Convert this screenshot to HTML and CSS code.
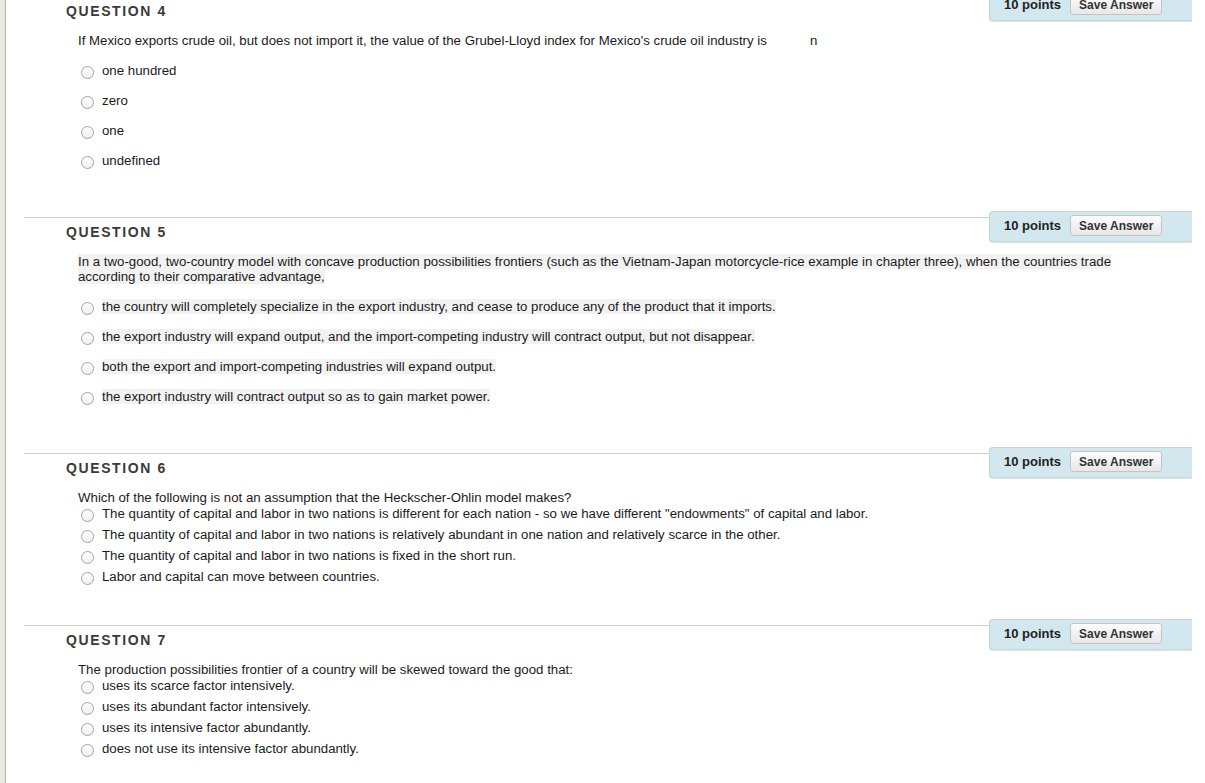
FILE: index.html
```html
<!DOCTYPE html>
<html lang="en">
<head>
    <meta charset="UTF-8">
    <title>Test</title>
    <link rel="stylesheet" href="styles.css">
</head>
<body>

<div class="page">

    <section class="question first">
        <div class="q-head">
            <h3 class="q-title">QUESTION 4</h3>
            <div class="points">
                <span class="points-label">10 points</span>
                <button class="save-btn">Save Answer</button>
            </div>
        </div>
        <div class="q-body">
            <p class="q-text">If Mexico exports crude oil, but does not import it, the value of the Grubel-Lloyd index for Mexico's crude oil industry is<span class="blank">n</span></p>
            <ul class="options spaced">
                <li><input type="radio" name="q4"><span>one hundred</span></li>
                <li><input type="radio" name="q4"><span>zero</span></li>
                <li><input type="radio" name="q4"><span>one</span></li>
                <li><input type="radio" name="q4"><span>undefined</span></li>
            </ul>
        </div>
    </section>

    <section class="question">
        <div class="q-head">
            <h3 class="q-title">QUESTION 5</h3>
            <div class="points">
                <span class="points-label">10 points</span>
                <button class="save-btn">Save Answer</button>
            </div>
        </div>
        <div class="q-body">
            <p class="q-text"><span class="hl">In a two-good, two-country model with concave production possibilities frontiers (such as the Vietnam-Japan motorcycle-rice example in chapter three), when the countries trade<br>according to their comparative advantage,</span></p>
            <ul class="options spaced">
                <li><input type="radio" name="q5"><span class="hl">the country will completely specialize in the export industry, and cease to produce any of the product that it imports.</span></li>
                <li><input type="radio" name="q5"><span class="hl">the export industry will expand output, and the import-competing industry will contract output, but not disappear.</span></li>
                <li><input type="radio" name="q5"><span class="hl">both the export and import-competing industries will expand output.</span></li>
                <li><input type="radio" name="q5"><span class="hl">the export industry will contract output so as to gain market power.</span></li>
            </ul>
        </div>
    </section>

    <section class="question compact">
        <div class="q-head">
            <h3 class="q-title">QUESTION 6</h3>
            <div class="points">
                <span class="points-label">10 points</span>
                <button class="save-btn">Save Answer</button>
            </div>
        </div>
        <div class="q-body">
            <p class="q-text">Which of the following is not an assumption that the Heckscher-Ohlin model makes?</p>
            <ul class="options tight">
                <li><input type="radio" name="q6"><span>The quantity of capital and labor in two nations is different for each nation - so we have different "endowments" of capital and labor.</span></li>
                <li><input type="radio" name="q6"><span>The quantity of capital and labor in two nations is relatively abundant in one nation and relatively scarce in the other.</span></li>
                <li><input type="radio" name="q6"><span>The quantity of capital and labor in two nations is fixed in the short run.</span></li>
                <li><input type="radio" name="q6"><span>Labor and capital can move between countries.</span></li>
            </ul>
        </div>
    </section>

    <section class="question compact">
        <div class="q-head">
            <h3 class="q-title">QUESTION 7</h3>
            <div class="points">
                <span class="points-label">10 points</span>
                <button class="save-btn">Save Answer</button>
            </div>
        </div>
        <div class="q-body">
            <p class="q-text">The production possibilities frontier of a country will be skewed toward the good that:</p>
            <ul class="options tight">
                <li><input type="radio" name="q7"><span>uses its scarce factor intensively.</span></li>
                <li><input type="radio" name="q7"><span>uses its abundant factor intensively.</span></li>
                <li><input type="radio" name="q7"><span>uses its intensive factor abundantly.</span></li>
                <li><input type="radio" name="q7"><span>does not use its intensive factor abundantly.</span></li>
            </ul>
        </div>
    </section>

</div>

</body>
</html>
```

FILE: styles.css
```css
body {
    margin: 0;
    padding: 0;
    background-color: #ebe8e1;
    font-family: 'Liberation Sans', Arial, sans-serif;
    font-size: 13.25px;
    color: #1a1a1a;
    overflow: hidden;
}

.page {
    margin-left: 5px;
    border-left: 1px solid #b0b0b0;
    background-color: #ffffff;
    min-height: 100vh;
    overflow: hidden;
}

.question {
    margin: 0 13px 0 18px;
    border-top: 1px solid #d0d0d0;
    padding-bottom: 49px;
}

.question.first {
    margin-top: -4px;
}

.question.compact {
    padding-bottom: 41px;
}

.q-head {
    display: flex;
    justify-content: space-between;
    align-items: flex-start;
}

.q-title {
    margin: 6px 0 0 0;
    padding-left: 42px;
    font-size: 14px;
    line-height: 16px;
    font-weight: bold;
    letter-spacing: 1.6px;
    color: #3a3a3a;
}

/* points box sits over the top border */
.points {
    margin-top: -7px;
    width: 203px;
    box-sizing: border-box;
    height: 31px;
    padding: 4px 0 6px 14px;
    display: flex;
    align-items: center;
    gap: 9px;
    background-color: #d3e8ee;
    border: 1px solid #c3d7dd;
    border-right: none;
    border-radius: 4px 0 0 4px;
    box-shadow: 0 1px 1px rgba(0, 0, 0, 0.12);
}

.points-label {
    font-weight: bold;
    font-size: 13px;
    color: #222;
}

.save-btn {
    font-family: 'Liberation Sans', Arial, sans-serif;
    font-size: 12px;
    font-weight: bold;
    color: #333;
    height: 21px;
    padding: 0 8px;
    border: 1px solid #c4c4c4;
    border-radius: 3px;
    background: linear-gradient(#fdfdfd, #e7e7e7);
}

.q-body {
    padding: 12px 0 0 54px;
}

.q-text {
    margin: 0;
    line-height: 15px;
}

.blank {
    margin-left: 43px;
}

.hl {
    background-color: #f2f2f2;
}

.options {
    list-style: none;
    margin: 0;
    padding: 0;
    display: flex;
    flex-direction: column;
}

.options li {
    display: flex;
    align-items: flex-start;
    height: 15px;
    line-height: 15px;
    padding-left: 3px;
}

.options.spaced {
    margin-top: 15px;
    gap: 15px;
}

.options.tight {
    margin-top: 1px;
    gap: 6px;
}

.options input[type="radio"] {
    appearance: none;
    -webkit-appearance: none;
    width: 13px;
    height: 13px;
    margin: 3px 8px 0 0;
    flex-shrink: 0;
    border: 1px solid #a3a3a3;
    border-radius: 50%;
    background: linear-gradient(#ffffff, #f0f0f0);
    box-sizing: border-box;
}
```
